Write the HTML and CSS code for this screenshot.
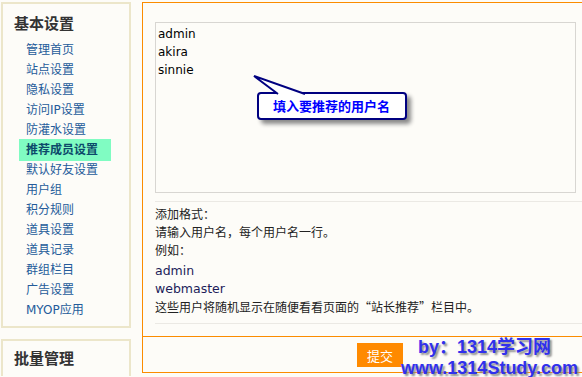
FILE: index.html
```html
<!DOCTYPE html>
<html lang="zh-CN">
<head>
  <meta charset="UTF-8" />
  <title>推荐成员设置</title>
  <link rel="stylesheet" href="styles.css">
</head>
<body>
  <div class="page">
    <!-- Sidebar -->
    <div class="sidebar">
      <div class="side-box">
        <h3>基本设置</h3>
        <ul class="menu">
          <li><a href="#">管理首页</a></li>
          <li><a href="#">站点设置</a></li>
          <li><a href="#">隐私设置</a></li>
          <li><a href="#">访问IP设置</a></li>
          <li><a href="#">防灌水设置</a></li>
          <li class="active"><a href="#">推荐成员设置</a></li>
          <li><a href="#">默认好友设置</a></li>
          <li><a href="#">用户组</a></li>
          <li><a href="#">积分规则</a></li>
          <li><a href="#">道具设置</a></li>
          <li><a href="#">道具记录</a></li>
          <li><a href="#">群组栏目</a></li>
          <li><a href="#">广告设置</a></li>
          <li><a href="#">MYOP应用</a></li>
        </ul>
      </div>
      <div class="side-box second">
        <h3>批量管理</h3>
      </div>
    </div>

    <!-- Main form -->
    <div class="main">
      <div class="form-area">
        <div class="input-wrap">
          <textarea class="names">admin
akira
sinnie</textarea>
          <div class="callout">
            填入要推荐的用户名
            <svg class="tail" width="60" height="24" viewBox="0 0 60 24">
              <path d="M27,22 L3,4 L54,22" fill="#fff" stroke="#000080" stroke-width="2" stroke-linejoin="miter"/>
            </svg>
          </div>
        </div>
        <div class="tips">
          <p>添加格式：</p>
          <p>请输入用户名，每个用户名一行。</p>
          <p>例如：</p>
          <p class="sample first">admin</p>
          <p class="sample">webmaster</p>
          <p>这些用户将随机显示在随便看看页面的<span class="cjk">“站长推荐”</span>栏目中。</p>
        </div>
      </div>
      <div class="btn-bar">
        <button type="button">提交</button>
      </div>
    </div>
  </div>

  <div class="watermark">
    <div class="wm-line1">by：1314学习网</div>
    <div class="wm-line2">www.1314Study.com</div>
  </div>
</body>
</html>
```

FILE: styles.css
```css
body {
  margin: 0;
  padding: 0;
  width: 582px;
  height: 377px;
  overflow: hidden;
  background-color: #fdfcf8;
  font-family: "DejaVu Sans", "Noto Sans CJK SC", sans-serif;
  font-size: 12px;
  color: #222;
  position: relative;
}
.page {
  display: flex;
  gap: 11px;
  padding: 2px 0 0 1px;
  align-items: flex-start;
}

/* Sidebar */
.sidebar {
  width: 130px;
  flex-shrink: 0;
  display: flex;
  flex-direction: column;
  gap: 11px;
}
.side-box {
  border: 2px solid #ece6ca;
  padding: 12px 0 6px 11px;
}
.side-box.second {
  padding: 10px 0 0 11px;
  height: 25px;
  border-bottom: none;
}
.side-box h3 {
  margin: 0;
  font-size: 15px;
  line-height: 16px;
  font-weight: bold;
  color: #333;
}
.menu {
  list-style: none;
  margin: 8px 0 0;
  padding: 0 0 0 12px;
}
.menu li {
  line-height: 20px;
  height: 20px;
}
.menu a {
  color: #245b9a;
  text-decoration: none;
}
.menu .active a {
  display: inline-block;
  background-color: #80fcc2;
  color: #0c4a6a;
  font-weight: bold;
  line-height: 22px;
  padding: 0 13px 0 7px;
  margin: -1px 0 -1px -7px;
}

/* Main panel */
.main {
  width: 446px;
  flex-shrink: 0;
  border: 1px solid #fb8c00;
}
.form-area {
  padding: 19px 11px 12px 12px;
}
.input-wrap {
  position: relative;
}
.names {
  display: block;
  box-sizing: border-box;
  width: 421px;
  height: 171px;
  margin: 0;
  padding: 2px 2px;
  border: 1px solid #d8d6d2;
  background: transparent;
  resize: none;
  font-family: "DejaVu Sans", sans-serif;
  font-size: 12px;
  line-height: 18px;
  color: #000;
}
.callout {
  position: absolute;
  left: 102px;
  top: 70px;
  box-sizing: border-box;
  width: 150px;
  height: 28px;
  border: 2px solid #000080;
  border-radius: 4px;
  background: #fff;
  box-shadow: 4px 4px 4px #8a8a8a;
  padding-left: 14px;
  line-height: 24px;
  color: #0000ff;
  font-weight: bold;
  font-size: 13px;
  font-family: "Noto Sans CJK SC", sans-serif;
}
.tail {
  position: absolute;
  left: -8px;
  top: -22px;
  display: block;
}
.tips {
  margin: 8px -11px 0 0;
  padding: 4px 0 6px;
  border-top: 1px solid #ebe9e4;
  border-bottom: 1px solid #ebe9e4;
}
.tips p {
  margin: 0;
  line-height: 18px;
}
.tips .cjk {
  font-family: "Noto Sans CJK SC", sans-serif;
  font-feature-settings: "fwid";
}
.tips .sample {
  color: #1c1c5a;
  font-size: 12.5px;
}
.tips .sample.first {
  margin-top: 2px;
}
.btn-bar {
  border-top: 1px solid #fb8c00;
  padding: 6px 0 5px 214px;
}
.btn-bar button {
  width: 46px;
  height: 24px;
  border: none;
  background-color: #ff8a00;
  color: #fff;
  font-family: "Noto Sans CJK SC", sans-serif;
  font-size: 13px;
  padding: 0;
  cursor: pointer;
}

/* Watermark over the corner */
.watermark {
  position: absolute;
  left: 401px;
  top: 337px;
  font-family: "Liberation Sans", "Noto Sans CJK SC", sans-serif;
  font-weight: bold;
  font-size: 18px;
  line-height: 21px;
  color: #3030ec;
  text-shadow: 2px 2px 2px #8c8c8c;
  white-space: nowrap;
}
.wm-line1 {
  padding-left: 17px;
}
```
